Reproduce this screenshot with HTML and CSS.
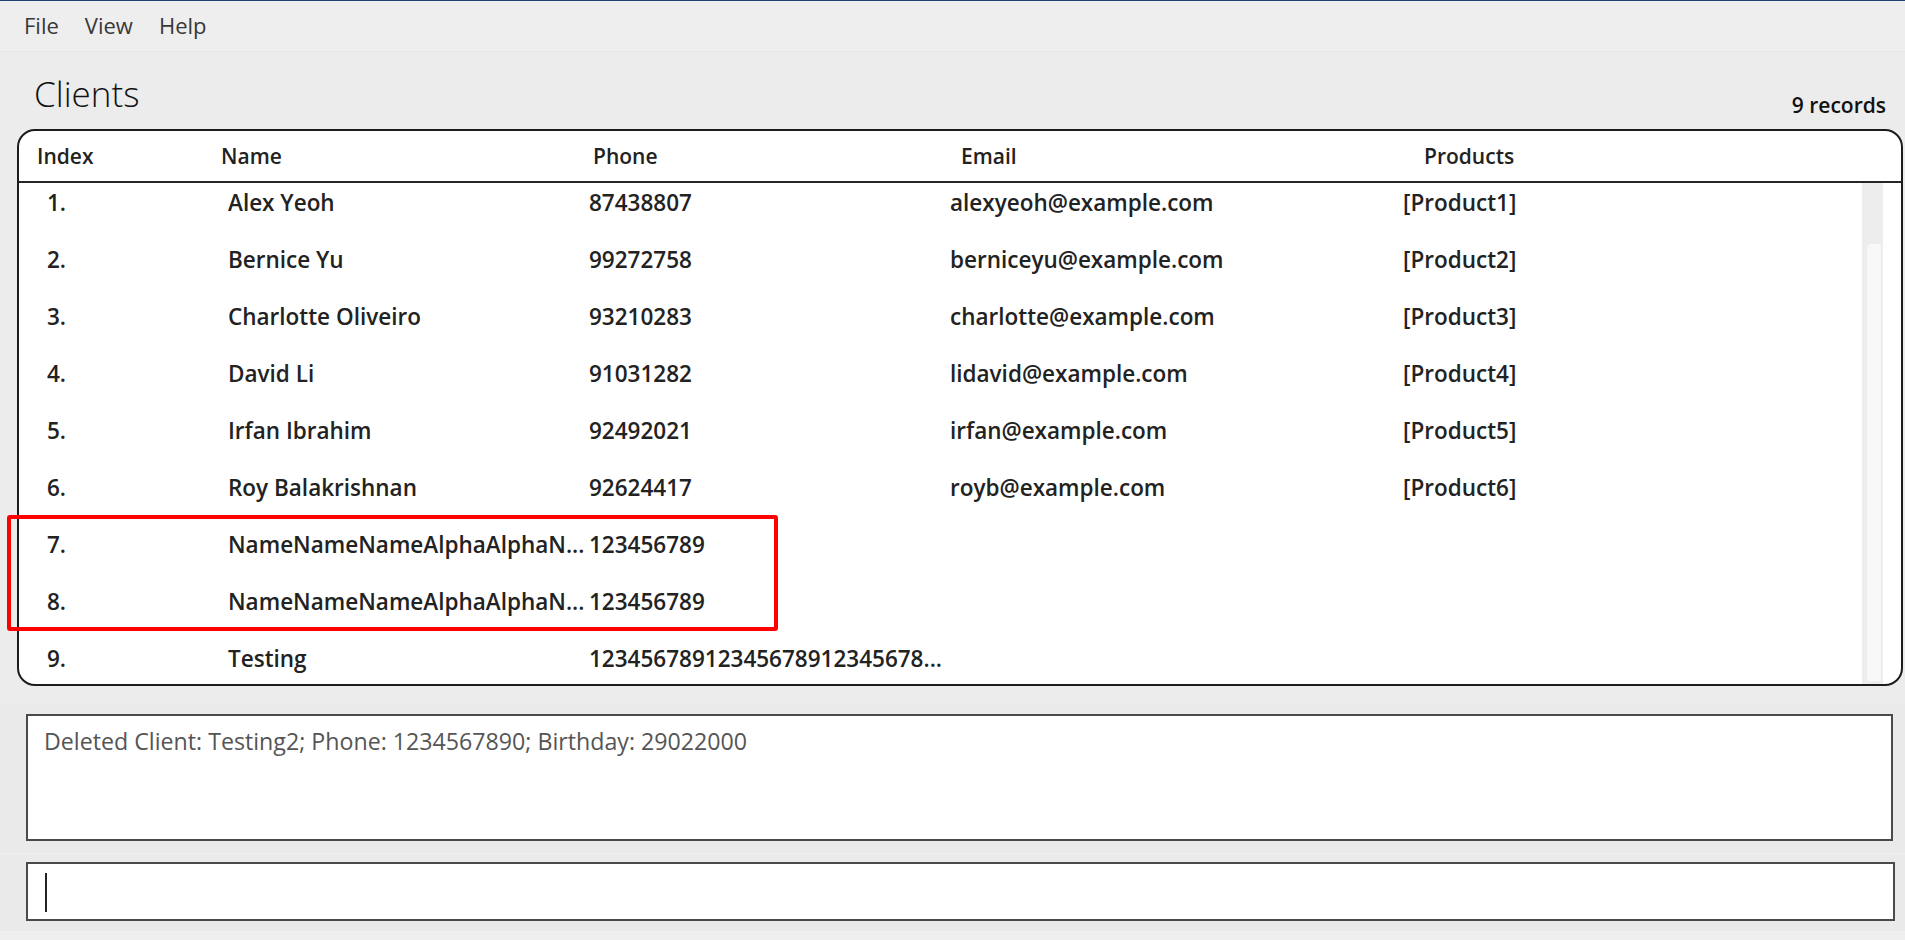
FILE: index.html
```html
<!DOCTYPE html>
<html lang="en">
<head>
<meta charset="utf-8">
<title>Clients</title>
<link rel="stylesheet" href="styles.css">
</head>
<body>
<div class="window">
  <nav class="menubar">
    <span class="menu-item">File</span>
    <span class="menu-item">View</span>
    <span class="menu-item">Help</span>
  </nav>

  <section class="list-pane">
    <div class="title-row">
      <h1 class="title">Clients</h1>
      <span class="records">9 records</span>
    </div>

    <div class="table-box">
      <div class="table-head">
        <div class="th th-index">Index</div>
        <div class="th th-name">Name</div>
        <div class="th th-phone">Phone</div>
        <div class="th th-email">Email</div>
        <div class="th th-products">Products</div>
      </div>
      <div class="table-body">
        <div class="rows">
          <div class="row"><div class="td td-index">1.</div><div class="td td-name">Alex Yeoh</div><div class="td td-phone">87438807</div><div class="td td-email">alexyeoh@example.com</div><div class="td td-products">[Product1]</div></div>
          <div class="row"><div class="td td-index">2.</div><div class="td td-name">Bernice Yu</div><div class="td td-phone">99272758</div><div class="td td-email">berniceyu@example.com</div><div class="td td-products">[Product2]</div></div>
          <div class="row"><div class="td td-index">3.</div><div class="td td-name">Charlotte Oliveiro</div><div class="td td-phone">93210283</div><div class="td td-email">charlotte@example.com</div><div class="td td-products">[Product3]</div></div>
          <div class="row"><div class="td td-index">4.</div><div class="td td-name">David Li</div><div class="td td-phone">91031282</div><div class="td td-email">lidavid@example.com</div><div class="td td-products">[Product4]</div></div>
          <div class="row"><div class="td td-index">5.</div><div class="td td-name">Irfan Ibrahim</div><div class="td td-phone">92492021</div><div class="td td-email">irfan@example.com</div><div class="td td-products">[Product5]</div></div>
          <div class="row"><div class="td td-index">6.</div><div class="td td-name">Roy Balakrishnan</div><div class="td td-phone">92624417</div><div class="td td-email">royb@example.com</div><div class="td td-products">[Product6]</div></div>
          <div class="row"><div class="td td-index">7.</div><div class="td td-name">NameNameNameAlphaAlphaN...</div><div class="td td-phone">123456789</div><div class="td td-email"></div><div class="td td-products"></div></div>
          <div class="row"><div class="td td-index">8.</div><div class="td td-name">NameNameNameAlphaAlphaN...</div><div class="td td-phone">123456789</div><div class="td td-email"></div><div class="td td-products"></div></div>
          <div class="row"><div class="td td-index">9.</div><div class="td td-name">Testing</div><div class="td td-phone">12345678912345678912345678...</div><div class="td td-email"></div><div class="td td-products"></div></div>
        </div>
        <div class="scroll-track"><div class="scroll-thumb"></div></div>
      </div>
    </div>
  </section>

  <section class="result-pane">
    <div class="result-box">Deleted Client: Testing2; Phone: 1234567890; Birthday: 29022000</div>
  </section>

  <section class="command-pane">
    <div class="command-box"><span class="caret"></span></div>
  </section>

  <div class="highlight"></div>
</div>
</body>
</html>
```

FILE: styles.css
```css
* { box-sizing: border-box; }

html, body {
  margin: 0;
  padding: 0;
  background: #efefef;
}

body {
  font-family: "Open Sans", "Noto Sans", "Liberation Sans", sans-serif;
  color: #222;
  width: 1905px;
  height: 940px;
  overflow: hidden;
}

.window {
  position: relative;
  width: 1905px;
  height: 940px;
  border-top: 1px solid #1f4470;
  display: flex;
  flex-direction: column;
}

/* ---------- menu ---------- */
.menubar {
  height: 51px;
  flex: none;
  display: flex;
  align-items: center;
  gap: 26px;
  padding-left: 24px;
  padding-bottom: 2px;
  background: #eeeeee;
  border-bottom: 1px solid #e7e7e7;
  font-size: 22px;
  color: #383838;
}

/* ---------- list pane ---------- */
.list-pane {
  flex: none;
  height: 651px;
  background: #ececec;
  display: flex;
  flex-direction: column;
  padding: 0 2px 17px 17px;
}

.title-row {
  height: 77px;
  flex: none;
  display: flex;
  justify-content: space-between;
  align-items: flex-start;
  padding-left: 17px;
  padding-right: 17px;
}

.title {
  margin: 19px 0 0 0;
  font-size: 35px;
  line-height: 46px;
  font-weight: 300;
  color: #111;
}

.records {
  margin-top: 38px;
  font-size: 21px;
  line-height: 30px;
  font-weight: 600;
  color: #111;
}

.table-box {
  flex: none;
  height: 557px;
  background: #fff;
  border: 2px solid #1c1c1c;
  border-radius: 18px;
  overflow: hidden;
  display: flex;
  flex-direction: column;
}

.table-head,
.row {
  display: grid;
  grid-template-columns: 204px 366px 361px 453px 1fr;
}

.table-head {
  height: 52px;
  flex: none;
  border-bottom: 2px solid #262626;
  font-size: 21px;
  line-height: 50px;
  font-weight: 600;
  color: #222;
}

.th { white-space: nowrap; }
.th-index { padding-left: 18px; }
.th-name { margin-left: -2px; }
.th-phone { padding-left: 4px; }
.th-email { padding-left: 11px; }
.th-products { padding-left: 21px; }

.table-body {
  flex: 1;
  display: flex;
  overflow: hidden;
}

.rows {
  flex: 1;
  margin-top: -9px;
}

.row {
  height: 57px;
  font-size: 22.5px;
  line-height: 57px;
  font-weight: 600;
  color: #222;
}

.td {
  white-space: nowrap;
  overflow: hidden;
  text-overflow: ellipsis;
}

.td-index { padding-left: 28px; }
.td-name { padding-left: 5px; padding-right: 1px; }
.td-phone { padding-right: 4px; }

.scroll-track {
  flex: none;
  width: 21px;
  margin-right: 18px;
  background: #ededed;
  padding: 61px 2px 3px 5px;
}

.scroll-thumb {
  height: 100%;
  background: #f8f8f8;
  border-radius: 4px;
}

/* ---------- result ---------- */
.result-pane {
  flex: none;
  height: 150px;
  background: #eaeaea;
  padding: 11px 12px 12px 26px;
}

.result-box {
  height: 127px;
  background: #fff;
  border: 2px solid #4a4a4a;
  padding: 9px 16px;
  font-size: 23.2px;
  line-height: 32px;
  color: #555;
}

/* ---------- command ---------- */
.command-pane {
  flex: none;
  height: 78px;
  background: #eaeaea;
  border-top: 1px solid #efefef;
  padding: 8px 10px 10px 26px;
}

.command-box {
  height: 59px;
  background: #fff;
  border: 2px solid #4a4a4a;
  padding: 9px 17px;
  display: flex;
}

.caret {
  width: 2px;
  height: 39px;
  background: #222;
}

/* ---------- annotation overlay ---------- */
.highlight {
  position: absolute;
  left: 7px;
  top: 514px;
  width: 771px;
  height: 116px;
  border: 4px solid #ff0000;
  border-radius: 3px;
  pointer-events: none;
}
```
